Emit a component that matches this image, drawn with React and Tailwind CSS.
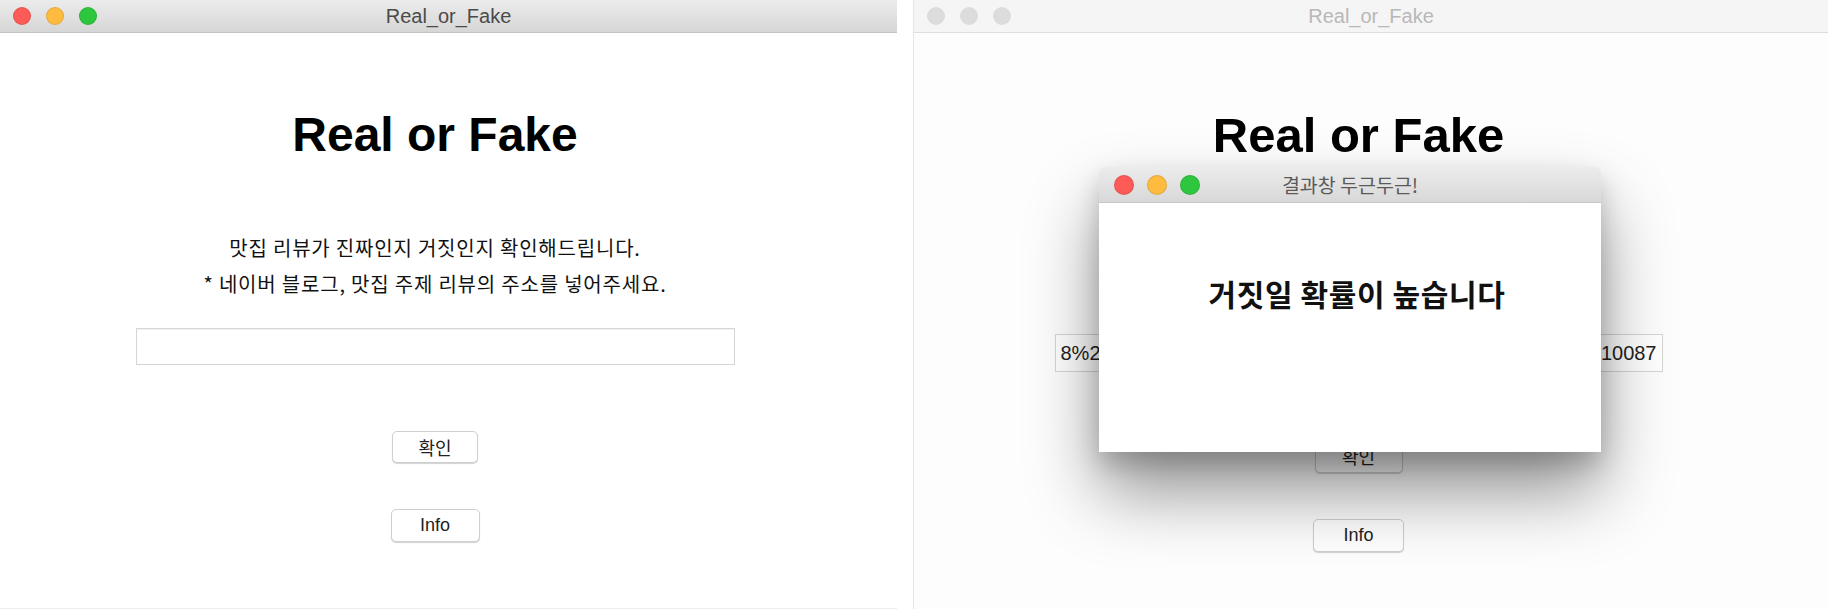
import { useMemo } from "react";

const sansFont = { fontFamily: '"Liberation Sans", Arial, sans-serif' };
const krFont = { fontFamily: '"Noto Sans CJK KR", "Noto Sans", sans-serif' };

function TrafficLights({ active = true, size = "h-[18px] w-[18px]", gap = "gap-[15px]" }) {
  const colors = active
    ? ["bg-[#fc5b57]", "bg-[#fdbc40]", "bg-[#2fc63f]"]
    : ["bg-[#dcdcdc]", "bg-[#dcdcdc]", "bg-[#dcdcdc]"];

  return (
    <div className={`flex items-center ${gap}`}>
      {colors.map((color, i) => (
        <span
          key={i}
          className={`${size} rounded-full ${color} ${
            active ? "border border-black/10" : ""
          }`}
        />
      ))}
    </div>
  );
}

function TitleBar({ title, active }) {
  return (
    <div
      className={`relative flex h-[33px] shrink-0 items-center border-b px-[13px] ${
        active
          ? "border-[#c4c4c4] bg-gradient-to-b from-[#ececec] to-[#d6d6d6]"
          : "border-[#dedede] bg-[#f5f5f5]"
      }`}
    >
      <TrafficLights active={active} />
      <span
        className={`absolute inset-x-0 text-center text-[20px] ${
          active ? "text-[#4a4a4a]" : "text-[#b8b8b8]"
        }`}
        style={sansFont}
      >
        {title}
      </span>
    </div>
  );
}

function MacButton({ children, className = "", font = krFont }) {
  return (
    <button
      className={`flex items-center justify-center rounded-[5px] border border-[#cfcfcf] bg-white text-[18px] text-[#222] shadow-[0_1px_1px_rgba(0,0,0,0.18)] ${className}`}
      style={font}
    >
      {children}
    </button>
  );
}

function ResultDialog() {
  return (
    <div className="absolute left-[185px] top-[167px] flex h-[285px] w-[502px] flex-col overflow-hidden rounded-t-[6px] bg-white shadow-[0_40px_70px_rgba(0,0,0,0.42),0_12px_24px_rgba(0,0,0,0.18)]">
      <div className="relative flex h-[36px] shrink-0 items-center border-b border-[#c8c8c8] bg-gradient-to-b from-[#ececec] to-[#d8d8d8] px-[15px]">
        <TrafficLights size="h-[20px] w-[20px]" gap="gap-[13px]" />
        <span
          className="absolute inset-x-0 text-center text-[19.5px] text-[#5a5a5a]"
          style={krFont}
        >
          결과창 두근두근!
        </span>
      </div>
      <div className="flex flex-1 justify-center pl-[14px] pt-[69px]">
        <p
          className="text-[30px] font-bold leading-[42px] tracking-[0.6px] text-[#111]"
          style={krFont}
        >
          거짓일 확률이 높습니다
        </p>
      </div>
    </div>
  );
}

export default function App() {
  const intro = useMemo(
    () => [
      "맛집 리뷰가 진짜인지 거짓인지 확인해드립니다.",
      "* 네이버 블로그, 맛집 주제 리뷰의 주소를 넣어주세요.",
    ],
    []
  );

  return (
    <div className="flex h-[609px] w-[1828px] overflow-hidden bg-white">
      {/* first window: empty form */}
      <div className="flex h-full w-[897px] shrink-0 flex-col border-b border-[#ececec] bg-white">
        <TitleBar title="Real_or_Fake" active />
        <div className="flex flex-col items-center pr-[27px]">
          <h1
            className="mt-[78px] text-[48px] font-bold leading-[48px] text-black"
            style={sansFont}
          >
            Real or Fake
          </h1>
          <div className="mt-[71px] flex flex-col items-center">
            {intro.map((line) => (
              <p
                key={line}
                className="text-[20px] leading-[36px] tracking-[0.8px] text-[#111]"
                style={krFont}
              >
                {line}
              </p>
            ))}
          </div>
          <div className="mt-[26px] h-[37px] w-[599px] border border-[#d6d6d6] bg-white shadow-[inset_0_1px_1px_rgba(0,0,0,0.06)]" />
          <MacButton className="mt-[66px] h-[32px] w-[86px] text-[17.5px]">확인</MacButton>
          <MacButton className="mt-[46px] h-[33px] w-[89px]" font={sansFont}>
            Info
          </MacButton>
        </div>
      </div>

      {/* second window: result popup on top */}
      <div className="relative ml-[16px] flex h-full w-[915px] shrink-0 flex-col border-l border-[#e6e6e6] bg-[#fdfdfd]">
        <TitleBar title="Real_or_Fake" active={false} />
        <div className="flex flex-col items-center pr-[25px]">
          <h1
            className="mt-[78px] text-[49px] font-bold leading-[48px] text-black"
            style={sansFont}
          >
            Real or Fake
          </h1>
          {/* intro lines sit under the popup here */}
          <div className="mt-[71px] h-[72px]" />
          <div
            className="mt-[32px] flex h-[38px] w-[608px] items-center justify-between overflow-hidden whitespace-nowrap border border-[#d6d6d6] bg-white px-[5px] text-[20px] text-[#222]"
            style={sansFont}
          >
            <span>8%2Fblog.naver.com%2F</span>
            <span>PostView.nhn%3FlogNo%3D221510087</span>
          </div>
          <MacButton className="mt-[68px] h-[33px] w-[88px] text-[17.5px]">확인</MacButton>
          <MacButton className="mt-[46px] h-[33px] w-[91px]" font={sansFont}>
            Info
          </MacButton>
        </div>
        <ResultDialog />
      </div>
    </div>
  );
}
